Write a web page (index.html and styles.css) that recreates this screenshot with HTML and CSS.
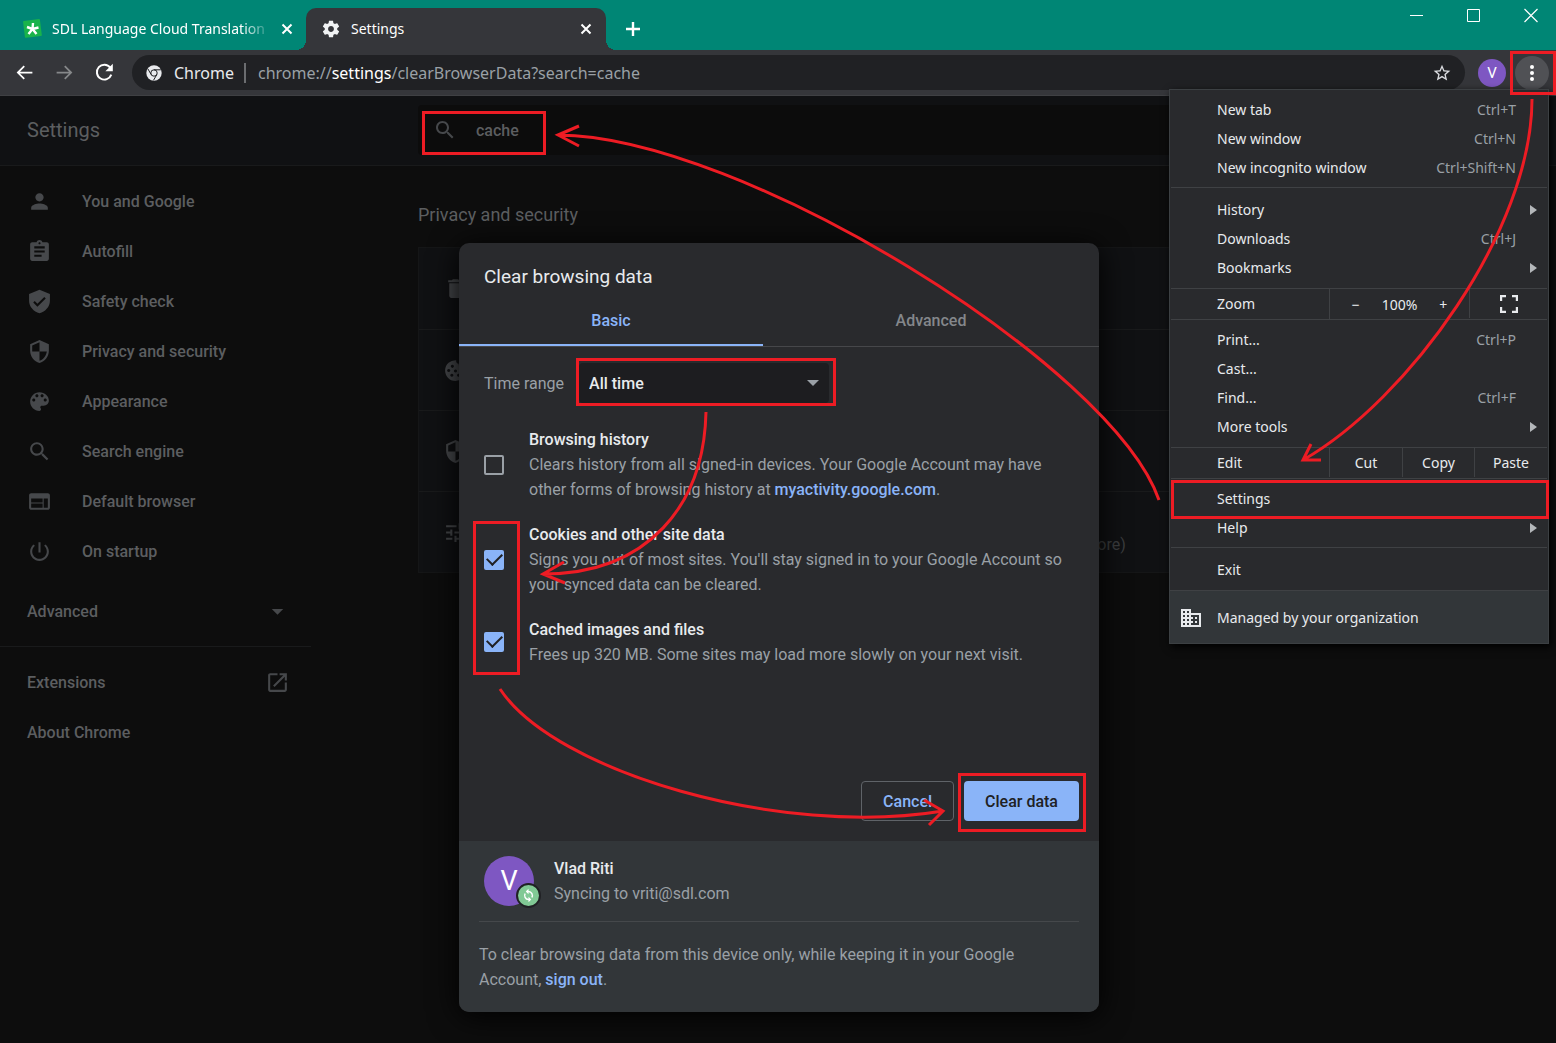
FILE: index.html
```html
<!DOCTYPE html>
<html lang="en">
<head>
<meta charset="utf-8">
<meta name="viewport" content="width=device-width, initial-scale=1">
<title>Settings</title>
<link rel="stylesheet" href="styles.css">
</head>
<body>
<div class="window">
  <header class="tabstrip">
    <div class="tab">
      <svg class="favicon" viewBox="0 0 20 20"><rect x="2" y="1" width="17" height="17" rx="1" fill="#19b34b" transform="rotate(-7 10 10)"/><path d="M10.500 10L11 4M10.500 10L16.500 8.500M10.500 10L14.500 15M10.500 10L6.500 15M10.500 10L5 8" stroke="#fff" stroke-width="2.400" fill="none"/></svg>
      <span class="tab-title faded">SDL Language Cloud Translation</span>
      <button class="tab-close" aria-label="Close tab"><svg viewBox="0 0 12 12"><path d="M1.500 1.500l9 9M10.500 1.500l-9 9" stroke="#fff" stroke-width="2"/></svg></button>
    </div>
    <div class="tab active">
      <svg class="favicon" viewBox="0 0 24 24" fill="#f1f3f4"><path d="M19.430 12.980c.04-.32.07-.64.07-.98s-.03-.66-.07-.98l2.110-1.650c.19-.15.24-.42.12-.64l-2-3.460c-.12-.22-.39-.3-.61-.22l-2.490 1c-.52-.4-1.080-.73-1.690-.98l-.38-2.650C14.460 2.180 14.250 2 14 2h-4c-.25 0-.46.18-.49.42l-.38 2.650c-.61.25-1.170.59-1.690.98l-2.490-1c-.23-.09-.49 0-.61.22l-2 3.460c-.13.22-.07.49.12.64l2.110 1.650c-.04.32-.07.65-.07.98s.03.66.07.98l-2.110 1.650c-.19.15-.24.42-.12.64l2 3.460c.12.22.39.3.61.22l2.490-1c.52.4 1.080.73 1.690.98l.38 2.650c.03.24.24.42.49.42h4c.25 0 .46-.18.49-.42l.38-2.650c.61-.25 1.170-.59 1.690-.98l2.490 1c.23.09.49 0 .61-.22l2-3.460c.12-.22.07-.49-.12-.64l-2.110-1.650zM12 15.500c-1.930 0-3.500-1.570-3.500-3.500s1.570-3.500 3.500-3.500 3.500 1.570 3.500 3.500-1.570 3.500-3.500 3.500z"/></svg>
      <span class="tab-title">Settings</span>
      <button class="tab-close" aria-label="Close tab"><svg viewBox="0 0 12 12"><path d="M1.500 1.500l9 9M10.500 1.500l-9 9" stroke="#fff" stroke-width="2"/></svg></button>
    </div>
    <button class="new-tab" aria-label="New tab"><svg viewBox="0 0 16 16"><path d="M8 1v14M1 8h14" stroke="#fff" stroke-width="2.400"/></svg></button>
    <div class="window-controls">
      <button aria-label="Minimize"><svg viewBox="0 0 14 14"><path d="M0 7.500h13" stroke="#fff"/></svg></button>
      <button aria-label="Maximize"><svg viewBox="0 0 14 14"><path d="M.5 1.500h12v12H.5z" stroke="#fff" fill="none"/></svg></button>
      <button aria-label="Close"><svg viewBox="0 0 14 14"><path d="M.5 1l13 13M13.500 1L.5 14" stroke="#fff" stroke-width="1.200"/></svg></button>
    </div>
  </header>

  <div class="toolbar">
    <div class="nav-buttons">
      <button aria-label="Back"><svg viewBox="0 0 24 24" fill="#fff"><path d="M21 11H6.830l5.590-5.590L11 4l-8 8 8 8 1.410-1.410L6.830 13H21v-2z"/></svg></button>
      <button aria-label="Forward"><svg viewBox="0 0 24 24" fill="#86888a"><path d="M3 11h14.170l-5.590-5.590L13 4l8 8-8 8-1.410-1.410L17.170 13H3v-2z"/></svg></button>
      <button aria-label="Reload"><svg viewBox="0 0 24 24"><path d="M19.800 14.500A8.500 8.500 0 1 1 18.600 6.500" fill="none" stroke="#fff" stroke-width="2.200"/><path d="M21.500 2v8.500H13z" fill="#fff"/></svg></button>
    </div>
    <div class="omnibox">
      <svg class="chrome-icon" viewBox="0 0 16 16"><circle cx="8" cy="8" r="7.700" fill="#e8eaed"/><circle cx="8" cy="8" r="3.200" fill="none" stroke="#202124"/><path d="M8 4.800h6.800M5.200 9.600L1.900 3.900M10.800 9.600L7.500 15.300" stroke="#202124" fill="none"/></svg>
      <span class="origin">Chrome</span>
      <span class="url">chrome://<b>settings</b>/clearBrowserData?search=cache</span>
      <button class="star" aria-label="Bookmark this tab"><svg viewBox="0 0 24 24" fill="#dadce0"><path d="M22 9.240l-7.190-.62L12 2 9.190 8.630 2 9.240l5.460 4.730L5.820 21 12 17.270 18.180 21l-1.630-7.030L22 9.240zM12 15.400l-3.760 2.270 1-4.280-3.320-2.880 4.380-.38L12 6.100l1.710 4.040 4.380.38-3.320 2.880 1 4.280L12 15.400z"/></svg></button>
    </div>
    <button class="profile" aria-label="Profile">V</button>
    <button class="kebab" aria-label="Customize and control"><svg viewBox="0 0 18 18" fill="#fff"><circle cx="9" cy="3" r="2"/><circle cx="9" cy="9" r="2"/><circle cx="9" cy="15" r="2"/></svg></button>
  </div>

  <div class="page">
    <header class="page-header">
      <h1>Settings</h1>
      <label class="search">
        <svg viewBox="0 0 24 24"><path d="M15.500 14h-.79l-.28-.27C15.410 12.590 16 11.110 16 9.500 16 5.910 13.090 3 9.500 3S3 5.910 3 9.500 5.910 16 9.500 16c1.610 0 3.090-.59 4.230-1.570l.27.28v.79l5 4.990L20.490 19l-4.990-5zm-6 0C7.010 14 5 11.990 5 9.500S7.010 5 9.500 5 14 7.010 14 9.500 11.990 14 9.500 14z"/></svg>
        <input type="text" value="cache" aria-label="Search settings">
      </label>
    </header>
    <div class="page-body">
      <nav class="sidebar">
        <a href="#"><svg viewBox="0 0 24 24"><path d="M12 12c2.210 0 4-1.790 4-4s-1.790-4-4-4-4 1.790-4 4 1.790 4 4 4zm0 2c-2.670 0-8 1.340-8 4v2h16v-2c0-2.660-5.330-4-8-4z"/></svg>You and Google</a>
        <a href="#"><svg viewBox="0 0 24 24"><path d="M19 3h-4.180C14.400 1.840 13.300 1 12 1c-1.300 0-2.400.84-2.820 2H5c-1.100 0-2 .9-2 2v14c0 1.100.9 2 2 2h14c1.100 0 2-.9 2-2V5c0-1.100-.9-2-2-2zm-7 0c.55 0 1 .45 1 1s-.45 1-1 1-1-.45-1-1 .45-1 1-1zm2 14H7v-2h7v2zm3-4H7v-2h10v2zm0-4H7V7h10v2z"/></svg>Autofill</a>
        <a href="#"><svg viewBox="0 0 24 24"><path d="M12 .8L2 4.800v6.400c0 5.700 4.300 10.400 10 12 5.700-1.600 10-6.300 10-12V4.800L12 .8zm-2 16.200l-4-4 1.410-1.410L10 14.170l6.590-6.590L18 9l-8 8z"/></svg>Safety check</a>
        <a href="#"><svg viewBox="0 0 24 24"><path d="M12 1L3 5v6c0 5.550 3.840 10.740 9 12 5.160-1.260 9-6.450 9-12V5l-9-4zm0 10.990h7c-.53 4.120-3.280 7.790-7 8.940V12H5V6.300l7-3.110v8.800z"/></svg>Privacy and security</a>
        <a href="#"><svg viewBox="0 0 24 24"><path d="M12 3c-4.970 0-9 4.030-9 9s4.030 9 9 9c.83 0 1.500-.67 1.500-1.500 0-.39-.15-.74-.39-1.010-.23-.26-.38-.61-.38-.99 0-.83.67-1.500 1.500-1.500H16c2.760 0 5-2.240 5-5 0-4.420-4.030-8-9-8zm-5.500 9c-.83 0-1.500-.67-1.500-1.500S5.670 9 6.500 9 8 9.670 8 10.500 7.330 12 6.500 12zm3-4C8.670 8 8 7.330 8 6.500S8.670 5 9.500 5s1.500.67 1.500 1.500S10.330 8 9.500 8zm5 0c-.83 0-1.500-.67-1.500-1.500S13.670 5 14.500 5s1.500.67 1.500 1.500S15.330 8 14.500 8zm3 4c-.83 0-1.500-.67-1.500-1.500S16.670 9 17.500 9s1.500.67 1.500 1.500-.67 1.500-1.500 1.500z"/></svg>Appearance</a>
        <a href="#"><svg viewBox="0 0 24 24"><path d="M15.500 14h-.79l-.28-.27C15.410 12.590 16 11.110 16 9.500 16 5.910 13.090 3 9.500 3S3 5.910 3 9.500 5.910 16 9.500 16c1.610 0 3.090-.59 4.230-1.570l.27.28v.79l5 4.990L20.490 19l-4.990-5zm-6 0C7.010 14 5 11.990 5 9.500S7.010 5 9.500 5 14 7.010 14 9.500 11.990 14 9.500 14z"/></svg>Search engine</a>
        <a href="#"><svg viewBox="0 0 24 24"><path d="M20 4H4c-1.100 0-1.990.9-1.990 2L2 18c0 1.100.9 2 2 2h16c1.100 0 2-.9 2-2V6c0-1.100-.9-2-2-2zm-5 14H4v-4h11v4zm0-5H4V9h11v4zm5 5h-4V9h4v9z"/></svg>Default browser</a>
        <a href="#"><svg viewBox="0 0 24 24"><path d="M13 3h-2v10h2V3zm4.830 2.170l-1.420 1.420C17.990 7.860 19 9.810 19 12c0 3.870-3.130 7-7 7s-7-3.130-7-7c0-2.190 1.010-4.140 2.580-5.420L6.170 5.170C4.230 6.820 3 9.260 3 12c0 4.970 4.030 9 9 9s9-4.030 9-9c0-2.740-1.230-5.180-3.170-6.830z"/></svg>On startup</a>
        <button class="advanced">Advanced<svg viewBox="0 0 24 24"><path d="M6.500 9.500h11L12 15z"/></svg></button>
        <hr>
        <a class="plain" href="#">Extensions<svg viewBox="0 0 24 24"><path d="M19 19H5V5h7V3H5c-1.110 0-2 .9-2 2v14c0 1.100.89 2 2 2h14c1.100 0 2-.9 2-2v-7h-2v7zM14 3v2h3.590l-9.830 9.830 1.410 1.410L19 6.410V10h2V3h-7z"/></svg></a>
        <a class="plain" href="#">About Chrome</a>
      </nav>
      <main>
        <h2>Privacy and security</h2>
        <ul class="card">
          <li><svg viewBox="0 0 24 24"><path d="M6 19c0 1.100.9 2 2 2h8c1.100 0 2-.9 2-2V7H6v12zM19 4h-3.500l-1-1h-5l-1 1H5v2h14V4z"/></svg></li>
          <li><svg viewBox="0 0 24 24"><path fill-rule="evenodd" d="M21.600 11.200c-1.600.4-3-.8-3-2.400-2 .3-3.800-1.200-3.500-3.300-1.600 0-2.700-1.500-2.400-3.400A10 10 0 1 0 22 12zM9 6.500a1.500 1.500 0 1 1-.01 0zM5.500 10.500a1.500 1.500 0 1 1-.01 0zM12 11a1.500 1.500 0 1 1-.01 0zM8.500 15a1.500 1.500 0 1 1-.01 0zM15 15a1.500 1.500 0 1 1-.01 0z"/></svg></li>
          <li><svg viewBox="0 0 24 24"><path d="M12 1L3 5v6c0 5.550 3.840 10.740 9 12 5.160-1.260 9-6.450 9-12V5l-9-4zm0 10.990h7c-.53 4.120-3.280 7.790-7 8.940V12H5V6.300l7-3.110v8.800z"/></svg></li>
          <li><svg viewBox="0 0 24 24"><path d="M3 17v2h6v-2H3zM3 5v2h10V5H3zm10 16v-2h8v-2h-8v-2h-2v6h2zM7 9v2H3v2h4v2h2V9H7zm14 4v-2H11v2h10zm-6-4h2V7h4V5h-4V3h-2v6z"/></svg><span class="row-text">Site Settings<small>Controls what information sites can use and show (location, camera, pop-ups, and more)</small></span></li>
        </ul>
      </main>
    </div>
  </div>

  <div class="scrim">
    <form class="dialog" role="dialog" aria-labelledby="dialog-title">
      <h2 id="dialog-title">Clear browsing data</h2>
      <div class="dialog-tabs" role="tablist">
        <button type="button" class="selected" role="tab">Basic</button>
        <button type="button" role="tab">Advanced</button>
      </div>
      <div class="dialog-body">
        <div class="range">
          <label for="range">Time range</label>
          <div class="select"><select id="range"><option>All time</option></select></div>
        </div>
        <div class="option">
          <input type="checkbox" id="history">
          <label for="history"><strong>Browsing history</strong>Clears history from all signed-in devices. Your Google Account may have other forms of browsing history at <a href="#">myactivity.google.com</a>.</label>
        </div>
        <div class="option">
          <input type="checkbox" id="cookies" checked>
          <label for="cookies"><strong>Cookies and other site data</strong>Signs you out of most sites. You'll stay signed in to your Google Account so your synced data can be cleared.</label>
        </div>
        <div class="option">
          <input type="checkbox" id="cached" checked>
          <label for="cached"><strong>Cached images and files</strong>Frees up 320 MB. Some sites may load more slowly on your next visit.</label>
        </div>
      </div>
      <div class="actions">
        <button type="button" class="cancel">Cancel</button>
        <button type="button" class="confirm">Clear data</button>
      </div>
      <footer>
        <div class="account">
          <div class="avatar">V<svg class="sync" viewBox="0 0 24 24"><path fill="#fff" d="M12 6V3.500L8.500 7l3.500 3.500V8a4 4 0 0 1 3.500 6l1.300 1.300A6 6 0 0 0 12 6zm0 10a4 4 0 0 1-3.500-6L7.200 8.700A6 6 0 0 0 12 18v2.500l3.500-3.500-3.500-3.500z"/></svg></div>
          <div><strong>Vlad Riti</strong>Syncing to vriti@sdl.com</div>
        </div>
        <p>To clear browsing data from this device only, while keeping it in your Google Account, <a href="#">sign out</a>.</p>
      </footer>
    </form>
  </div>

  <div class="menu" role="menu">
    <section>
      <button>New tab<kbd>Ctrl+T</kbd></button>
      <button>New window<kbd>Ctrl+N</kbd></button>
      <button>New incognito window<kbd>Ctrl+Shift+N</kbd></button>
    </section>
    <section class="roomy">
      <button class="sub">History</button>
      <button>Downloads<kbd>Ctrl+J</kbd></button>
      <button class="sub">Bookmarks</button>
    </section>
    <section class="split zoom">
      <span>Zoom</span>
      <div><button aria-label="Zoom out">−</button><output>100%</output><button aria-label="Zoom in">+</button></div>
      <button aria-label="Full screen"><svg viewBox="0 0 18 18"><path d="M1 6V1h5M12 1h5v5M17 12v5h-5M6 17H1v-5" fill="none" stroke="#e8eaed" stroke-width="2.400"/></svg></button>
    </section>
    <section class="tools">
      <button>Print...<kbd>Ctrl+P</kbd></button>
      <button>Cast...</button>
      <button>Find...<kbd>Ctrl+F</kbd></button>
      <button class="sub">More tools</button>
    </section>
    <section class="split edit">
      <span>Edit</span>
      <button>Cut</button>
      <button>Copy</button>
      <button>Paste</button>
    </section>
    <section>
      <button>Settings</button>
      <button class="sub">Help</button>
    </section>
    <section class="roomy">
      <button>Exit</button>
    </section>
    <section class="managed">
      <button><svg viewBox="0 0 20 18"><path fill="#e8eaed" fill-rule="evenodd" d="M0 0h10v4h10v14H0zM2 2v2h2V2zM6 2v2h2V2zM2 6v2h2V6zM6 6v2h2V6zM2 10v2h2v-2zM6 10v2h2v-2zM2 14v2h2v-2zM6 14v2h2v-2zM10 6v2h2v2h-2v2h2v2h-2v2h8V6zM14 8h2v2h-2zM14 12h2v2h-2z"/></svg>Managed by your organization</button>
    </section>
  </div>

  <svg class="annotations" viewBox="0 0 1556 1043" width="1556" height="1043" aria-hidden="true">
    <rect x="423.500" y="112.500" width="121" height="41"/>
    <rect x="1511.500" y="52.500" width="43" height="41"/>
    <rect x="577.500" y="359.500" width="257" height="45"/>
    <rect x="474.500" y="522.500" width="44" height="151"/>
    <rect x="959.500" y="774.500" width="125" height="56"/>
    <rect x="1172.500" y="481.500" width="375" height="36"/>
    <path d="M558 135C740 136 1112 365 1159 500M579 126L558 135L579 146"/>
    <path d="M1532 99C1532 230 1408 400 1303 460M1311 444L1303 460L1321 460"/>
    <path d="M706 412C704 505 648 574 543 574M564 562L543 574L565 583"/>
    <path d="M500 689C555 772 780 838 943 811M924 800L943 811L929 825"/>
  </svg>
</div>
</body>
</html>
```
FILE: styles.css
```css
* { box-sizing: border-box; }

body {
  margin: 0;
  background: #0d0d0d;
  font-family: Roboto, "Liberation Sans", sans-serif;
  font-size: 16px;
}

button {
  padding: 0;
  border: 0;
  background: none;
  color: inherit;
  font: inherit;
}

a { color: #8ab4f8; text-decoration: none; font-weight: 500; }
svg { display: block; flex: none; }

.window {
  position: relative;
  display: flex;
  flex-direction: column;
  min-height: 100vh;
  overflow: hidden;
}

/* Tab strip */
.tabstrip {
  display: flex;
  align-items: flex-end;
  height: 50px;
  padding-left: 8px;
  background: #008675;
  color: #fff;
  font: 14px "Noto Sans", "Open Sans", sans-serif;
}

.tab {
  position: relative;
  display: flex;
  align-items: center;
  width: 298px;
  height: 42px;
  padding: 0 13px 1px 14px;
}

.tab.active {
  width: 300px;
  padding: 0 14px 1px 15px;
  border-radius: 10px 10px 0 0;
  background: #35363a;
}

.tab.active::before,
.tab.active::after {
  content: "";
  position: absolute;
  bottom: 0;
  width: 10px;
  height: 10px;
}

.tab.active::before { right: 100%; background: radial-gradient(circle at 0 0, transparent 10px, #35363a 10px); }
.tab.active::after { left: 100%; background: radial-gradient(circle at 100% 0, transparent 10px, #35363a 10px); }

.favicon { width: 20px; height: 20px; margin-right: 10px; }
.tab-title { flex: 1; overflow: hidden; white-space: nowrap; }
.faded { mask-image: linear-gradient(to right, #000 88%, transparent 102%); }
.tab-close { margin-left: 14px; }
.tab-close svg { width: 12px; height: 12px; }
.new-tab { height: 42px; margin-left: 19px; }
.new-tab svg { width: 16px; height: 16px; }

.window-controls {
  display: flex;
  gap: 43px;
  align-self: flex-start;
  margin-left: auto;
  padding: 8px 18px 0 0;
}

.window-controls svg { width: 14px; height: 14px; overflow: visible; }

/* Toolbar */
.toolbar {
  display: flex;
  align-items: center;
  height: 46px;
  padding: 0 7px 0 14px;
  border-bottom: 1px solid #3f4043;
  background: #35363a;
  font: 16px "Noto Sans", "Open Sans", sans-serif;
}

.nav-buttons { display: flex; gap: 19px; margin-right: 17px; }
.nav-buttons svg { width: 21px; height: 21px; }

.omnibox {
  display: flex;
  flex: 1;
  align-items: center;
  height: 35px;
  padding: 0 13px 0 14px;
  border-radius: 18px;
  background: #202124;
  color: #9aa0a6;
}

.chrome-icon { width: 16px; height: 16px; margin-right: 12px; }
.origin { padding-right: 10px; border-right: 2px solid #6b6d70; color: #e8eaed; line-height: 20px; }
.url { margin-left: 12px; }
.url b { color: #fff; font-weight: 400; }
.star { margin-left: auto; }
.star svg { width: 20px; height: 20px; }

.profile {
  width: 28px;
  height: 28px;
  margin: 0 9px 0 13px;
  border-radius: 50%;
  background: #7e57c2;
  color: #fff;
  font: 15px Roboto, sans-serif;
}

.kebab {
  display: grid;
  place-items: center;
  width: 34px;
  height: 34px;
  border-radius: 50%;
  background: #505155;
}

.kebab svg { width: 18px; height: 18px; }

/* Settings page, dimmed behind the dialog */
.page { flex: 1; color: #5c5e60; fill: #46484b; }
.page a, .page button { color: #5c5e60; }

.page-header {
  display: flex;
  align-items: center;
  height: 70px;
  padding-bottom: 1px;
  border-bottom: 1px solid #191a1b;
  background: #101113;
}

.page-header h1 {
  width: 311px;
  margin: 0;
  padding-left: 27px;
  font-size: 20px;
  font-weight: 400;
}

.search {
  display: flex;
  align-items: center;
  width: 850px;
  height: 50px;
  margin-left: 107px;
  padding-left: 15px;
  border-radius: 4px;
  background: #0c0c0c;
}

.search svg { width: 24px; height: 24px; }

.search input {
  flex: 1;
  min-width: 0;
  margin-left: 19px;
  padding: 0;
  border: 0;
  outline: 0;
  background: none;
  color: #5c5e60;
  font: 500 16px Roboto, sans-serif;
}

.page-body { display: flex; }
.sidebar { width: 311px; padding-top: 10px; }

.sidebar a, .advanced {
  display: flex;
  align-items: center;
  width: 100%;
  height: 50px;
  padding-left: 27px;
  font-weight: 500;
}

.sidebar svg { width: 25px; height: 25px; margin-right: 30px; }
.sidebar .plain svg, .advanced svg { margin: 0 21px 0 auto; }
.advanced { margin-top: 10px; }
.sidebar hr { margin: 10px 0; border: 0; border-top: 1px solid #191a1b; }

main { flex: 1; max-width: 957px; padding: 37px 0 0 107px; }
main h2 { margin: 0 0 20px; font-size: 18px; font-weight: 400; line-height: 24px; }

.card {
  margin: 0;
  padding: 0;
  border: 1px solid #151617;
  background: #101113;
  list-style: none;
}

.card li { display: flex; align-items: center; height: 81px; padding-left: 24px; }
.card li + li { border-top: 1px solid #191a1b; }
.card svg { width: 25px; height: 25px; margin-right: 30px; }
.row-text { display: grid; line-height: 25px; }
.row-text small { color: #3c3e40; font-size: 16px; white-space: nowrap; }

/* Clear browsing data dialog */
.scrim {
  position: absolute;
  inset: 243px 0 auto 2px;
  display: flex;
  justify-content: center;
}

.dialog {
  width: 640px;
  padding-top: 21px;
  overflow: hidden;
  border-radius: 10px;
  background: #292a2d;
  box-shadow: 0 4px 30px #000;
  color: #9aa0a6;
  line-height: 25px;
}

.dialog h2 {
  margin: 0;
  padding: 0 25px;
  color: #e8eaed;
  font-size: 19px;
  font-weight: 400;
}

.dialog strong { display: block; color: #e8eaed; font-weight: 500; }

.dialog-tabs {
  display: grid;
  grid-template-columns: 1fr 1fr;
  gap: 16px;
  height: 58px;
  padding-right: 16px;
  border-bottom: 1px solid #46474a;
}

.dialog-tabs button {
  padding-top: 7px;
  border-bottom: 2px solid transparent;
  color: #84878b;
  font-weight: 500;
}

.dialog-tabs .selected { border-color: #8ab4f8; color: #8ab4f8; }

.dialog-body {
  display: flex;
  flex-direction: column;
  gap: 20px;
  min-height: 434px;
  padding: 16px 24px 0 25px;
}

.range { display: flex; align-items: center; height: 40px; margin-bottom: 4px; }
.select { position: relative; margin-left: 15px; }

.select select {
  width: 250px;
  height: 40px;
  padding: 0 10px;
  border: 0;
  border-radius: 4px;
  appearance: none;
  background: #1d1d20;
  color: #e8eaed;
  font: 500 16px Roboto, sans-serif;
}

.select::after {
  content: "";
  position: absolute;
  top: 17px;
  right: 10px;
  border: 6px solid transparent;
  border-top-color: #9aa0a6;
  border-bottom: 0;
}

.option { display: flex; align-items: center; }

.option input {
  flex: none;
  display: grid;
  place-items: center;
  width: 20px;
  height: 20px;
  margin: 0 25px 0 0;
  border: 2px solid #9aa0a6;
  border-radius: 2px;
  appearance: none;
}

.option input:checked { border-color: #8ab4f8; background: #8ab4f8; }

.option input:checked::after {
  content: "";
  width: 13px;
  height: 7px;
  margin-bottom: 5px;
  border: solid #202124;
  border-width: 0 0 2px 2px;
  transform: rotate(-45deg);
}

.actions { display: flex; gap: 10px; justify-content: flex-end; padding: 0 20px 20px; }
.actions button { height: 40px; padding: 0 21px; border-radius: 4px; font-weight: 500; }
.actions .cancel { border: 1px solid #5f6368; color: #8ab4f8; }
.actions .confirm { background: #8ab4f8; color: #202124; }

.dialog footer { padding: 15px 20px 20px; background: #323639; }

.account {
  display: flex;
  gap: 20px;
  padding: 0 5px 15px;
  border-bottom: 1px solid #45484b;
}

.avatar {
  position: relative;
  display: grid;
  place-items: center;
  width: 50px;
  height: 50px;
  border-radius: 50%;
  background: #7e57c2;
  color: #fff;
  font-size: 27px;
}

.sync {
  position: absolute;
  right: -7px;
  bottom: -2px;
  width: 25px;
  height: 25px;
  padding: 1px;
  border: 2px solid #202124;
  border-radius: 50%;
  background: #81c995;
}

.dialog footer p { margin: 20px 0 0; }

/* Browser menu */
.menu {
  position: absolute;
  top: 89px;
  right: 7px;
  width: 380px;
  border: 1px solid #3c4043;
  background: #292a2d;
  box-shadow: 2px 3px 8px #000;
  color: #e8eaed;
  font: 14px "Noto Sans", "Open Sans", sans-serif;
}

.menu section { margin: 0 1px; padding: 5px 0; }
.menu section + section { border-top: 1px solid #3f4144; }
.menu .roomy { padding: 7px 0 6px; }
.menu .tools { padding-bottom: 6px; }
.menu .split { display: grid; grid-template-columns: 158px 140px 1fr; height: 31px; padding: 0; }
.menu .edit { grid-template-columns: 158px 73px 72px 1fr; }

.menu button {
  display: flex;
  align-items: center;
  width: 100%;
  height: 29px;
  padding: 0 31px 0 46px;
}

.menu kbd { margin-left: auto; color: #9aa0a6; font: inherit; }
.menu .sub { padding-right: 10px; }

.sub::after {
  content: "";
  margin-left: auto;
  border: 5px solid transparent;
  border-right: 0;
  border-left: 7px solid #b4b7ba;
}

.split span { padding-left: 46px; line-height: 30px; }
.menu .split > button { justify-content: center; padding: 0; border-left: 1px solid #3f4144; }
.split div { display: flex; align-items: center; border-left: 1px solid #3f4144; }
.menu .split div button { flex: 1; justify-content: center; padding: 0; }
.zoom svg { width: 18px; height: 18px; }

.menu .managed { margin: 0; padding: 12px 0 11px; background: #323639; }
.managed svg { width: 20px; height: 18px; margin-right: 16px; }
.menu .managed button { padding-left: 11px; }

/* Hand-drawn walkthrough marks over the window */
.annotations {
  position: absolute;
  top: 0;
  left: 0;
  fill: none;
  stroke: #ed1c24;
  stroke-width: 3;
  pointer-events: none;
}
```
